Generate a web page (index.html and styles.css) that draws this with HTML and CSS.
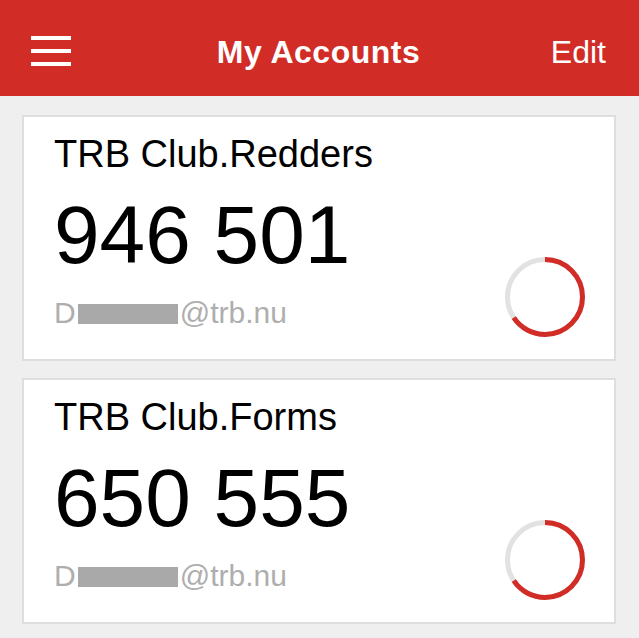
FILE: index.html
```html
<!DOCTYPE html>
<html>
<head>
<meta charset="utf-8">
<link rel="stylesheet" href="styles.css">
</head>
<body>
<header class="topbar">
  <div class="menu" aria-label="Menu">
    <span class="bar"></span><span class="bar"></span><span class="bar"></span>
  </div>
  <h1 class="title">My Accounts</h1>
  <div class="edit">Edit</div>
</header>
<main class="list">
  <section class="card">
    <div class="info">
      <div class="name">TRB Club.Redders</div>
      <div class="code">946 501</div>
      <div class="email">D<span class="redact"></span>@trb.nu</div>
    </div>
    <svg class="ring" width="80" height="80" viewBox="0 0 80 80">
      <circle cx="40" cy="40" r="37.5" class="track"/>
      <circle cx="40" cy="40" r="37.5" class="progress" transform="rotate(-90 40 40)"/>
    </svg>
  </section>
  <section class="card">
    <div class="info">
      <div class="name">TRB Club.Forms</div>
      <div class="code">650 555</div>
      <div class="email">D<span class="redact"></span>@trb.nu</div>
    </div>
    <svg class="ring" width="80" height="80" viewBox="0 0 80 80">
      <circle cx="40" cy="40" r="37.5" class="track"/>
      <circle cx="40" cy="40" r="37.5" class="progress" transform="rotate(-90 40 40)"/>
    </svg>
  </section>
</main>
</body>
</html>
```

FILE: styles.css
```css
* { box-sizing: border-box; }
html, body { margin: 0; padding: 0; }
body {
  background: #efefef;
  font-family: "Liberation Sans", Arial, sans-serif;
  color: #000;
  overflow: hidden;
}
.topbar {
  height: 96px;
  background: #d22c27;
  display: grid;
  grid-template-columns: 1fr auto 1fr;
  align-items: center;
  padding: 8px 33px 0 31px;
  color: #fff;
}
.menu {
  display: flex;
  flex-direction: column;
  gap: 9px;
  width: 40px;
  margin-top: -2px;
}
.bar {
  display: block;
  height: 4px;
  background: #fff;
}
.title {
  margin: 0;
  font-size: 32px;
  font-weight: 700;
  letter-spacing: 0.5px;
  line-height: 1;
}
.edit {
  justify-self: end;
  font-size: 32px;
  line-height: 1;
}
.list {
  padding: 19px 23px 0 22px;
  display: flex;
  flex-direction: column;
  gap: 17px;
}
.card {
  height: 246px;
  background: #fff;
  border: 2px solid #dedede;
  display: flex;
  padding: 17px 29px 22px 30px;
}
.info {
  flex: 1;
}
.name {
  font-size: 38px;
  line-height: 40px;
}
.code {
  font-size: 82px;
  line-height: 82px;
  margin-top: 20px;
}
.email {
  margin-top: 21px;
  font-size: 30px;
  line-height: 32px;
  color: #aeaeae;
  display: flex;
  align-items: center;
}
.redact {
  display: inline-block;
  width: 100px;
  height: 20px;
  background: #a9a9a9;
  margin: 1px 2px 0 2px;
}
.ring {
  align-self: flex-end;
  flex: none;
}
.track {
  fill: none;
  stroke: #e2e2e2;
  stroke-width: 5;
}
.progress {
  fill: none;
  stroke: #d22c27;
  stroke-width: 5;
  stroke-dasharray: 154.5 235.6;
}
```
